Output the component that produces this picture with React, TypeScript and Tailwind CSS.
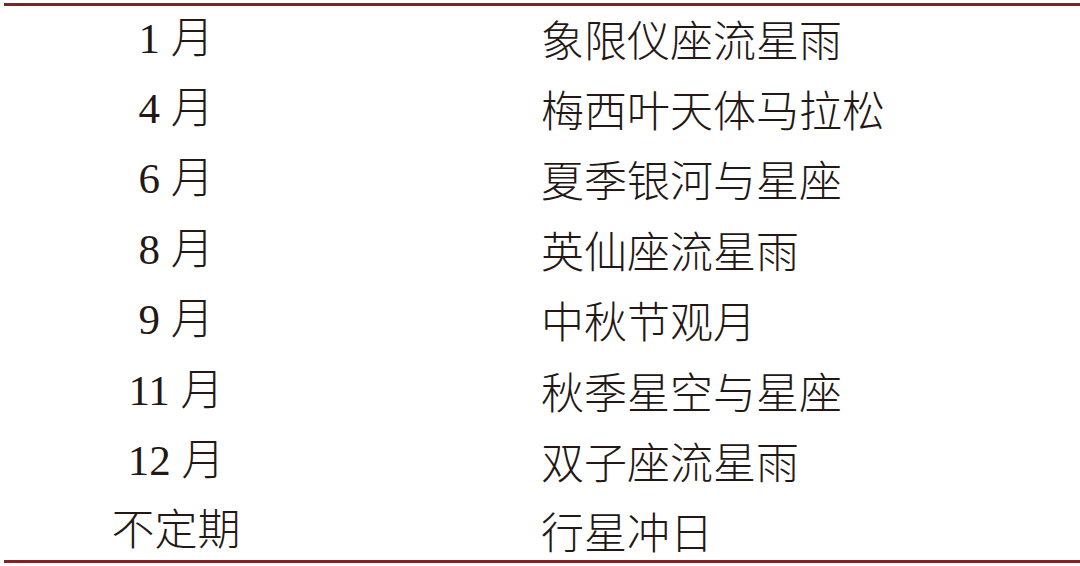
import React from 'react';

const rows: [string, string][] = [
  ['1 月', '象限仪座流星雨'],
  ['4 月', '梅西叶天体马拉松'],
  ['6 月', '夏季银河与星座'],
  ['8 月', '英仙座流星雨'],
  ['9 月', '中秋节观月'],
  ['11 月', '秋季星空与星座'],
  ['12 月', '双子座流星雨'],
  ['不定期', '行星冲日'],
];

const App: React.FC = () => {
  return (
    <div className="w-[1080px] h-[566px] bg-white pl-[4px] pt-[3px] overflow-hidden">
      {/* Table */}
      <div className="h-[560px] border-y-[3px] border-[#7b2626] pt-[3px] flex flex-col justify-between text-[#231815]">
        {rows.map(([month, event]) => (
          <div key={month} className="h-[58px] flex items-center">
            <div className="w-[344px] text-center text-[43px] leading-none font-['Liberation_Serif','Noto_Sans_CJK_SC',serif] font-light">
              {month}
            </div>
            <div className="pl-[193px] text-[43px] leading-none font-['Noto_Sans_CJK_SC',sans-serif] font-light">
              {event}
            </div>
          </div>
        ))}
      </div>
    </div>
  );
};

export default App;
